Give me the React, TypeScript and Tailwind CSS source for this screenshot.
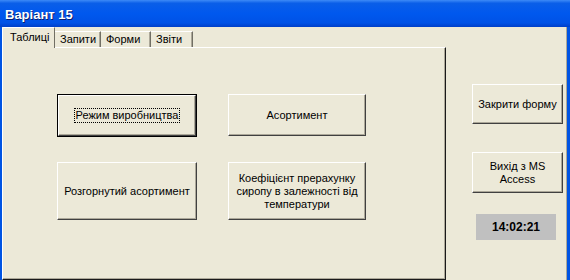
import type { ReactNode } from "react";

const face = "bg-[#ece9d8]";

function Btn({ children, className = "" }: { children: ReactNode; className?: string }) {
  return (
    <div
      className={`flex items-center justify-center text-center ${face} border border-t-white border-l-white border-r-[#404040] border-b-[#404040] shadow-[inset_-1px_-1px_0_#aca899] text-[11px] leading-[13px] text-black ${className}`}
    >
      {children}
    </div>
  );
}

function Tab({ label, width, active = false }: { label: string; width: string; active?: boolean }) {
  if (active) {
    return (
      <div className={`relative z-10 -mb-px h-[21px] ${width} ${face} border-t border-l border-t-white border-l-white border-r border-r-[#716f64] rounded-tl-[2px] pl-[7px] pt-[3px] text-[11px] leading-[13px]`}>
        {label}
      </div>
    );
  }
  return (
    <div className={`h-[16px] ${width} ${face} border-t border-t-white border-r border-r-[#716f64] shadow-[inset_-1px_0_0_#aca899] pl-[5px] pt-[1px] text-[11px] leading-[13px]`}>
      {label}
    </div>
  );
}

export default function App() {
  return (
    <div className="w-[570px] h-[280px] overflow-hidden bg-[#0054e3] flex flex-col font-['Liberation_Sans',Arial,sans-serif] text-black">
      <div className="h-[27px] shrink-0 flex items-center pl-[5px] bg-[linear-gradient(to_bottom,#3d8af7_0%,#0a5ee8_12%,#0058ee_50%,#0052e6_85%,#003fc8_100%)]">
        <span className="text-white font-bold text-[13px] leading-none pt-[1px] [text-shadow:1px_1px_0_#0a1e6e]">
          Варіант 15
        </span>
      </div>

      <div className={`flex-1 flex ml-[2px] mr-[3px] ${face} border-r border-r-[#aca899]`}>
        <div className="w-[444px] flex flex-col">
          <div className="h-[20px] flex items-end">
            <Tab label="Таблиці" width="w-[53px]" active />
            <Tab label="Запити" width="w-[46px]" />
            <Tab label="Форми" width="w-[50px]" />
            <Tab label="Звіти" width="w-[42px]" />
          </div>
          <div className="flex-1 border border-t-white border-l-white border-r-[#1a1a1a] border-b-[#1a1a1a] shadow-[inset_-1px_-1px_0_#aca899] pl-[54px] pt-[46px]">
            <div className="grid grid-cols-[140px_138px] grid-rows-[43px_58px] gap-x-[31px] gap-y-[25px]">
              <div className="border border-black">
                <Btn className="h-full">
                  <span className="border border-dotted border-black px-[1px]">Режим виробництва</span>
                </Btn>
              </div>
              <Btn className="h-[42px]">Асортимент</Btn>
              <Btn>Розгорнутий асортимент</Btn>
              <Btn>
                Коефіцієнт прерахунку
                <br />
                сиропу в залежності від
                <br />
                температури
              </Btn>
            </div>
          </div>
        </div>

        <div className="flex flex-col pl-[26px] pt-[57px]">
          <Btn className="w-[91px] h-[40px]">Закрити форму</Btn>
          <Btn className="w-[91px] h-[41px] mt-[28px]">
            Вихід з MS
            <br />
            Access
          </Btn>
          <div className="w-[80px] h-[26px] mt-[21px] ml-[4px] bg-[#c0c0c0] flex items-center justify-center font-bold text-[12px]">
            14:02:21
          </div>
        </div>
      </div>
    </div>
  );
}
